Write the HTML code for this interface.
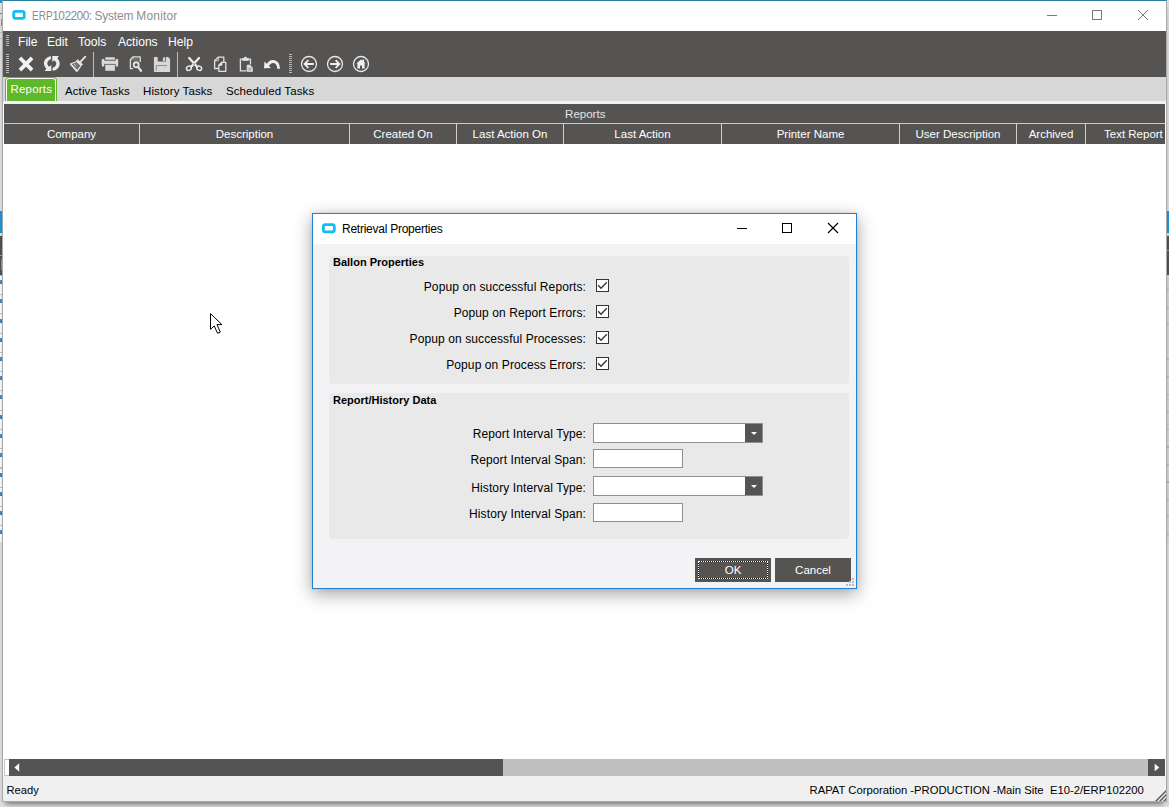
<!DOCTYPE html>
<html><head><meta charset="utf-8"><title>ERP102200: System Monitor</title>
<style>
*{box-sizing:border-box;margin:0;padding:0}
html,body{width:1169px;height:807px;overflow:hidden}
body{position:relative;background:#e6e6e6;font-family:"Liberation Sans",Arial,sans-serif;font-size:12px;color:#000}
.abs{position:absolute}
#win{position:absolute;left:2px;top:0;width:1165px;height:802px;box-shadow:0 5px 6px -3px rgba(0,0,0,.55);background:#fff;border:1px solid #a9a9a9;border-top:1px solid #2a809f}
#inner{position:absolute;left:1px;top:0;width:1162px;height:100%}
#title{position:absolute;left:0;top:0;width:100%;height:30px;background:#fff}
#title .txt{position:absolute;left:27.6px;top:8px;font-size:11.9px;letter-spacing:-.32px;color:#8c8c8c;white-space:nowrap}
#dark{position:absolute;left:-1px;top:30px;width:1163px;height:46px;background:#565453}
.menu{position:absolute;top:4px;color:#fff;font-size:12.1px;white-space:nowrap}
#tabs{position:absolute;left:-1px;top:76px;width:1163px;height:24px;background:#d7d7d7;border-bottom:0;box-shadow:0 3px 0 #f3f3f3}
.tab{position:absolute;top:8px;font-size:11.5px;letter-spacing:.1px;color:#000;white-space:nowrap}
#gridcap{position:absolute;left:0;top:103px;width:1161px;height:20px;text-indent:1.5px;background:#565453;color:#e4e4e4;text-align:center;font-size:11.5px;line-height:21px;border-bottom:1px solid #c9c9c9}
#gridhdr{position:absolute;left:0;top:123px;width:1161px;overflow:hidden;height:20px;background:#565453;color:#fff;font-size:11.5px}
.col{position:absolute;top:0;height:20px;line-height:21px;text-align:center;border-right:1px solid #d0d0d0;white-space:nowrap;overflow:hidden}
#hscroll{position:absolute;left:0;top:758px;width:1161px;height:17px;background:#c0c0c0}
#status{position:absolute;left:-1px;top:775px;width:1163px;height:25px;background:#f0f0f0;font-size:11.5px}

#rtab{position:absolute;left:1px;top:76px;width:52px;height:24px;background:#5fb82a;border:1px solid #5fb82a;border-bottom:0;border-radius:4px 4px 0 0}
#rtab i{position:absolute;left:0;top:0;right:0;bottom:0;border:1px solid #f4fbe9;border-radius:3px 3px 0 0;border-bottom:0}
#rtab span{position:absolute;left:4.5px;top:4.5px;font-size:11.4px;letter-spacing:.25px;color:#fff;white-space:nowrap}
#dlg{position:absolute;left:312px;top:213px;width:545px;height:376px;background:#f3f3f5;border:1px solid #1f80d6;box-shadow:0 5px 17px 0 rgba(0,0,0,.36),0 0 4px rgba(0,0,0,.10)}
#dtitle{position:absolute;left:0;top:0;width:100%;height:30px;background:#fff}
#dtitle span{position:absolute;left:29px;top:8px;font-size:12px;letter-spacing:-.25px;white-space:nowrap;color:#000}
.grp{position:absolute;left:16px;width:520px;background:#e9e9e9;border-radius:3px}
.grp b{position:absolute;left:4px;top:0px;font-size:11px;font-weight:bold;white-space:nowrap}
.lbl{position:absolute;right:270px;font-size:12px;white-space:nowrap;letter-spacing:.1px}
.chk{position:absolute;left:283px;width:13px;height:13px;background:#fff;border:1px solid #333}
.inp{position:absolute;left:280px;background:#fff;border:1px solid #8f8f8f}
.cbtn{position:absolute;right:0;top:0;width:17px;height:100%;background:#565453}
.cbtn:after{content:"";position:absolute;left:5.5px;top:8px;border:3px solid transparent;border-top:3.5px solid #fff;border-bottom:0}
.btn{position:absolute;top:344px;width:76px;height:24px;background:#565453;color:#fff;font-size:11.5px;text-align:center;line-height:25px}
</style></head><body>

<div class="abs" style="left:0;top:0;width:2px;height:807px;background:#e2e2e2"></div>
<div class="abs" style="left:0;top:0;width:2px;height:3px;background:#1c97dd"></div>
<div class="abs" style="left:0;top:13px;width:2px;height:1px;background:#8a8a8a"></div>
<div class="abs" style="left:1px;top:19px;width:1px;height:7px;background:#6f9fd0"></div>
<div class="abs" style="left:0;top:32px;width:2px;height:1px;background:#bdbdbd"></div>
<div class="abs" style="left:0;top:38px;width:2px;height:1px;background:#bdbdbd"></div>
<div class="abs" style="left:0;top:211px;width:2px;height:22px;background:#1c97dd"></div>
<div class="abs" style="left:0;top:236px;width:2px;height:39px;background:#565453"></div>
<div class="abs" style="left:0;top:255px;width:2px;height:1px;background:#9a9998"></div>
<div class="abs" style="left:1px;top:259px;width:1px;height:11px;background:#7d93b8"></div>
<div class="abs" style="left:0;top:275px;width:2px;height:267px;background:repeating-linear-gradient(180deg,#c4c4c4 0,#c4c4c4 1px,#fff 1px,#fff 5px,#5a8fc8 5px,#3b7fc4 9px,#fff 9px,#fff 19.25px)"></div>
<div class="abs" style="left:1167px;top:0;width:2px;height:807px;background:#dedede"></div>
<div class="abs" style="left:1167px;top:211px;width:2px;height:22px;background:#1c97dd"></div>
<div class="abs" style="left:1167px;top:236px;width:2px;height:39px;background:#565453"></div>
<div class="abs" style="left:1167px;top:250px;width:2px;height:1px;background:#9a9998"></div>
<div class="abs" style="left:1167px;top:275px;width:2px;height:267px;background:repeating-linear-gradient(180deg,#d6d6d6 0,#d6d6d6 14px,#b4b4b4 14px,#b4b4b4 15px,#d6d6d6 15px,#d6d6d6 17.5px)"></div>
<div id="win"><div id="inner">
 <div id="title">
  <svg class="abs" style="left:0;top:0" width="1163" height="30" viewBox="4 1 1163 30" fill="none">
   <rect x="13.7" y="11.4" width="10.5" height="6.9" rx="1.8" stroke="#13bdf0" stroke-width="2.8" fill="#fff"/>
   <path d="M1047,15.5h10" stroke="#7a7a7a" stroke-width="1"/>
   <rect x="1092.5" y="10.5" width="9" height="9" stroke="#7a7a7a" stroke-width="1"/>
   <path d="M1138,10L1148,20M1148,10L1138,20" stroke="#7a7a7a" stroke-width="1"/>
  </svg>
  <span class="txt"><span style="display:inline-block;transform:scaleX(.84);transform-origin:0 50%;margin-right:-3.9px;letter-spacing:0">ERP</span><span style="letter-spacing:-.5px">102200: </span><span style="letter-spacing:-.15px">System </span><span style="letter-spacing:.22px">Monitor</span></span></div>
 <div id="dark">
  <span class="menu" style="left:15px">File</span>
  <span class="menu" style="left:44px">Edit</span>
  <span class="menu" style="left:75px">Tools</span>
  <span class="menu" style="left:115px">Actions</span>
  <span class="menu" style="left:165px">Help</span>
 </div>

 <svg class="abs" style="left:-4px;top:-1px" width="1169" height="100" viewBox="0 0 1169 100" fill="none">
  <!-- grips -->
  <g stroke="#b9b8b7" stroke-width="1">
   <path d="M6,35.5h3M6,37.5h3M6,39.5h3M6,41.5h3M6,43.5h3M6,45.5h3"/>
   <path d="M6,54.5h3M6,56.5h3M6,58.5h3M6,60.5h3M6,62.5h3M6,64.5h3M6,66.5h3M6,68.5h3M6,70.5h3M6,72.5h3"/>
   <path d="M289,54.5h3M289,56.5h3M289,58.5h3M289,60.5h3M289,62.5h3M289,64.5h3M289,66.5h3M289,68.5h3M289,70.5h3M289,72.5h3"/>
  </g>
  <!-- separators -->
  <path d="M93.5,52V77M177.5,52V77" stroke="#bdbcbb" stroke-width="1"/>
  <!-- X -->
  <path d="M21.3,59.3L30.7,68.7M30.7,59.3L21.3,68.7" stroke="#f2f2f2" stroke-width="3.8" stroke-linecap="square"/>
  <!-- refresh -->
  <g fill="#ececec" stroke="none">
   <path id="rf" d="M50.8,56.2 C46.5,56.8 43.8,60 43.9,63.6 C44,65.6 45,67.4 46.4,68.8 L44.6,71 H51.3 V65 L49.3,66.8 C48,65.6 47.3,64.6 47.3,63.4 C47.3,61.4 49,59.6 51.2,59 Z"/>
   <path transform="rotate(180 51.8 63.5)" d="M50.8,56.2 C46.5,56.8 43.8,60 43.9,63.6 C44,65.6 45,67.4 46.4,68.8 L44.6,71 H51.3 V65 L49.3,66.8 C48,65.6 47.3,64.6 47.3,63.4 C47.3,61.4 49,59.6 51.2,59 Z"/>
  </g>
  <!-- broom -->
  <g stroke="#e8e8e8" fill="none" stroke-linecap="round" stroke-linejoin="round">
   <path d="M85.3,56.6L80.4,61.8" stroke-width="1.7"/>
   <path d="M77.9,59.8L82.6,64.2L81,66L76.2,61.5Z" fill="#e8e8e8" stroke-width="0.7"/>
   <path d="M75.6,62L70.4,64L76.9,71.5L80.4,66.6" stroke-width="1.2" fill="#e8e8e8" fill-opacity="0.22"/>
   <path d="M72.6,65.4l1,1.1M74.4,67.2l1,1.1M76.2,69l0.8,0.9M74.6,64.4l0.9,1" stroke-width="0.9"/>
  </g>
  <!-- printer -->
  <g fill="#dadada">
   <rect x="105.3" y="57.3" width="9.6" height="2.4" rx="0.4"/>
   <rect x="101.8" y="60.7" width="16.3" height="3.2"/>
   <rect x="101.8" y="58.9" width="2.5" height="7.5" rx="0.4"/>
   <rect x="115.6" y="58.9" width="2.5" height="7.5" rx="0.4"/>
   <rect x="105.3" y="64.7" width="9.6" height="6.1"/>
  </g>
  <!-- preview -->
  <g stroke="#e0e0e0" fill="none" stroke-width="1.3" stroke-linejoin="round">
   <path d="M133,56.8h7.2v5.2M133,56.8L130.4,59.6v9h2.6"/>
   <path d="M133.2,57v2.8h-2.6" stroke-width="0.8" opacity=".7"/>
   <rect x="134" y="57.8" width="4.6" height="3" fill="#8a8988" stroke="none" opacity=".55"/>
   <circle cx="136.2" cy="64.8" r="2.5" stroke-width="1.9" fill="#565453"/>
   <path d="M138.4,67.4L141,70.8" stroke-width="2.3" stroke-linecap="round"/>
  </g>
  <!-- save -->
  <path fill="#d8d8d8" d="M154.7,56.9h13.1l2.3,1.9v12.4a0.8,0.8 0 0 1 -0.8,0.8h-14.6a0.8,0.8 0 0 1 -0.8,-0.8v-13.5a0.8,0.8 0 0 1 0.8,-0.8z M157.7,56.9v4.6h8.3v-4.6z" fill-rule="evenodd"/>
  <rect x="162.9" y="57.4" width="2.3" height="3.6" fill="#d8d8d8"/>
  <path d="M156.3,70.5v-4.9h10.7" stroke="#6e6c6b" stroke-width="0.7" fill="none"/>
  <!-- scissors -->
  <g stroke="#ececec" fill="none">
   <path d="M189.2,58L196.8,66.6M199,58L191.4,66.6" stroke-width="2.3" stroke-linecap="round"/>
   <ellipse cx="188.9" cy="68.3" rx="2.5" ry="2" transform="rotate(-25 188.9 68.3)" stroke-width="1.4"/>
   <ellipse cx="199.2" cy="68.3" rx="2.5" ry="2" transform="rotate(25 199.2 68.3)" stroke-width="1.4"/>
  </g>
  <circle cx="194.1" cy="64" r="0.7" fill="#565453"/>
  <!-- copy -->
  <g stroke="#e2e2e2" fill="#565453" stroke-width="1.3" stroke-linejoin="round">
   <path d="M218.2,57.2h5.6v11.3h-9.2v-7.7z"/>
   <path d="M218.4,57.4v3.4h-3.4" stroke-width="0.8" fill="none"/>
   <path d="M221.8,62.3h4v9h-7v-6z"/>
   <path d="M222,62.5v2.8h-3" stroke-width="0.8" fill="#e2e2e2"/>
  </g>
  <!-- paste -->
  <g stroke="#e2e2e2" fill="none" stroke-width="1.3" stroke-linejoin="round">
   <path d="M246.4,70.9h-6v-11.8h10.1v5.4"/>
   <path d="M242.6,58.4h1.6a1.3,1.3 0 0 1 2.6,0h1.6v2h-5.8z" fill="#e2e2e2" stroke-width="0.8"/>
   <path d="M249.8,65.1h-2.7v6.4h5.3v-3.8z" fill="#e2e2e2" stroke-width="0.7"/>
   <path d="M248.4,68.3h2.8M248.4,70h2.8" stroke="#6e6c6b" stroke-width="0.7"/>
  </g>
  <!-- undo -->
  <path d="M267.6,65.4C270.6,59.4 278.4,60.2 278.6,68.8" stroke="#f0f0f0" stroke-width="2.8" fill="none"/>
  <path d="M264.5,61.6L264,68.3L270.9,68.1Z" fill="#f0f0f0"/>
  <!-- nav circles -->
  <g stroke="#e6e6e6" stroke-width="1.3" fill="none">
   <circle cx="309" cy="64" r="7.5"/>
   <circle cx="335" cy="64" r="7.5"/>
   <circle cx="361" cy="64" r="7.5"/>
  </g>
  <g stroke="#f0f0f0" stroke-width="1.8" fill="none" stroke-linecap="butt">
   <path d="M304.6,64h9.2M308.4,60.2L304.6,64L308.4,67.8"/>
   <path d="M330.2,64h9.2M335.6,60.2L339.4,64L335.6,67.8"/>
  </g>
  <path d="M356.4,63.6L361,59.4L362.6,60.8V59.6H364.2V62.2L365.6,63.6H364.6V68.4H362V65.4H360V68.4H357.4V63.6Z" fill="#f0f0f0"/>
 </svg>
 <div id="tabs">
  <span class="tab" style="left:62px">Active Tasks</span>
  <span class="tab" style="left:140px">History Tasks</span>
  <span class="tab" style="left:223px">Scheduled Tasks</span>
 </div>
 <div id="rtab"><i></i><span>Reports</span></div>
 <div id="gridcap">Reports</div>
 <div id="gridhdr">
  <div class="col" style="left:0;width:136px">Company</div>
  <div class="col" style="left:136px;width:210px">Description</div>
  <div class="col" style="left:346px;width:107px">Created On</div>
  <div class="col" style="left:453px;width:107px">Last Action On</div>
  <div class="col" style="left:560px;width:158px">Last Action</div>
  <div class="col" style="left:718px;width:178px">Printer Name</div>
  <div class="col" style="left:896px;width:117px">User Description</div>
  <div class="col" style="left:1013px;width:69px">Archived</div>
  <div class="col" style="left:1082px;width:100px;border-right:0;text-align:left;padding-left:18px">Text Report</div>
 </div>
 <div id="hscroll">
  <div class="abs" style="left:0;top:0;width:5px;height:17px;background:#fff;border:1px solid #c2c2c2;border-right:0"></div>
  <div class="abs" style="left:5px;top:0;width:494px;height:17px;background:#565453"></div>
  <div class="abs" style="left:1144px;top:0;width:17px;height:17px;background:#565453"></div>
  <svg class="abs" style="left:0;top:0" width="1163" height="17" viewBox="0 0 1163 17"><path d="M10.4,8.5L15.2,4.3V12.7Z M1155.3,8.5L1150.7,4.7V12.3Z" fill="#fff"/></svg>
 </div>
 <div id="status"><span class="abs" style="left:3.4px;top:8px;font-size:11.2px">Ready</span>
 <span class="abs" style="left:806.5px;top:8px;white-space:nowrap;font-size:11.28px">RAPAT Corporation -PRODUCTION -Main Site&nbsp; E10-2/ERP102200</span>
  <svg class="abs" style="right:0;bottom:0" width="11" height="11" viewBox="0 0 11 11"><path d="M0.5,11.5L11.5,0.5M4.5,11.5L11.5,4.5M8.5,11.5L11.5,8.5" stroke="#5c5c5c" stroke-width="1.5"/></svg></div>
</div></div>

<div id="dlg">
 <div id="dtitle">
  <svg class="abs" style="left:0;top:0" width="543" height="30" viewBox="313 214 543 30" fill="none">
   <rect x="323.4" y="224.7" width="10.9" height="7.1" rx="1.8" stroke="#13bdf0" stroke-width="2.8" fill="#fff"/>
   <path d="M737,228.5h10" stroke="#000" stroke-width="1"/>
   <rect x="782.5" y="223.5" width="9" height="9" stroke="#000" stroke-width="1"/>
   <path d="M828,223L838,233M838,223L828,233" stroke="#000" stroke-width="1.2"/>
  </svg>
  <span>Retrieval Properties</span>
 </div>
 <div class="grp" style="top:42px;height:128px"><b style="top:0">Ballon Properties</b></div>
 <div class="grp" style="top:179px;height:146px"><b style="top:1px">Report/History Data</b></div>
 <span class="lbl" style="top:66px">Popup on successful Reports:</span>
 <span class="lbl" style="top:92px">Popup on Report Errors:</span>
 <span class="lbl" style="top:118px">Popup on successful Processes:</span>
 <span class="lbl" style="top:144px">Popup on Process Errors:</span>
 <div class="chk" style="top:65px"><svg width="11" height="11" viewBox="0 0 11 11" style="display:block"><path d="M1.1,5.3L4,8.3L9.8,2.3" stroke="#333" stroke-width="1.3" fill="none"/></svg></div>
 <div class="chk" style="top:91px"><svg width="11" height="11" viewBox="0 0 11 11" style="display:block"><path d="M1.1,5.3L4,8.3L9.8,2.3" stroke="#333" stroke-width="1.3" fill="none"/></svg></div>
 <div class="chk" style="top:117px"><svg width="11" height="11" viewBox="0 0 11 11" style="display:block"><path d="M1.1,5.3L4,8.3L9.8,2.3" stroke="#333" stroke-width="1.3" fill="none"/></svg></div>
 <div class="chk" style="top:143px"><svg width="11" height="11" viewBox="0 0 11 11" style="display:block"><path d="M1.1,5.3L4,8.3L9.8,2.3" stroke="#333" stroke-width="1.3" fill="none"/></svg></div>
 <span class="lbl" style="top:213px">Report Interval Type:</span>
 <span class="lbl" style="top:239px">Report Interval Span:</span>
 <span class="lbl" style="top:267px">History Interval Type:</span>
 <span class="lbl" style="top:293px">History Interval Span:</span>
 <div class="inp" style="top:209px;width:170px;height:20px"><div class="cbtn"></div></div>
 <div class="inp" style="top:235px;width:90px;height:19px"></div>
 <div class="inp" style="top:262px;width:170px;height:20px"><div class="cbtn"></div></div>
 <div class="inp" style="top:289px;width:90px;height:19px"></div>
 <div class="btn" style="left:382px">OK<i style="position:absolute;left:3px;top:3px;right:3px;bottom:3px;border:1px solid #1a1a1a"></i><i style="position:absolute;left:3px;top:3px;right:3px;bottom:3px;border:1px dotted #fff"></i></div>
 <div class="btn" style="left:462px">Cancel</div>
 <svg class="abs" style="right:1px;bottom:1px" width="11" height="11" viewBox="0 0 11 11"><path d="M8,2h2v2h-2zM5,5h2v2h-2zM8,5h2v2h-2zM2,8h2v2h-2zM5,8h2v2h-2zM8,8h2v2h-2z" fill="#bdbdbd"/></svg>
</div>
<svg class="abs" style="left:208px;top:311px" width="18" height="26" viewBox="208 311 18 26"><path d="M210.5,313.6V329.4L214.2,325.9L217.6,333.3L220.3,332.1L217,324.6H221.9Z" fill="#fff" stroke="#000" stroke-width="1"/></svg>
</body></html>
